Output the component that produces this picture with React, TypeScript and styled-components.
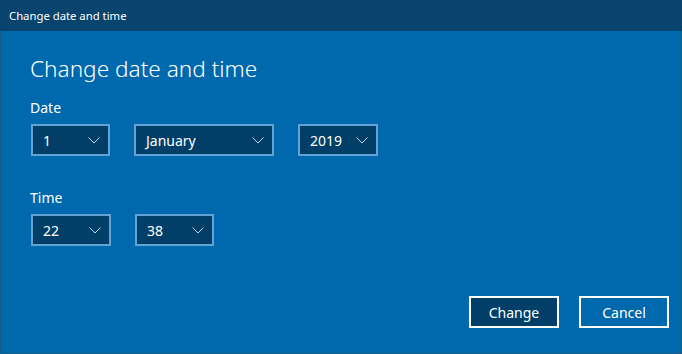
import React from "react";
import styled, { createGlobalStyle } from "styled-components";

const Global = createGlobalStyle`
  html, body { margin: 0; padding: 0; }
  body { width: 682px; height: 354px; overflow: hidden; font-family: "Noto Sans", "Open Sans", sans-serif; }
`;

const Window = styled.div`
  width: 682px;
  height: 354px;
  box-sizing: border-box;
  background: #0068ad;
  border: 1px solid #1c5a85;
  border-top: none;
  display: flex;
  flex-direction: column;
  color: #fff;
`;

const TitleBar = styled.div`
  height: 31px;
  flex: none;
  background: #08446d;
  display: flex;
  align-items: center;
  padding-left: 9px;
  font-size: 11.3px;
  margin: 0 -1px;
`;

const Body = styled.div`
  flex: 1;
  display: flex;
  flex-direction: column;
  padding: 22px 12px 25px 29px;
`;

const Heading = styled.h1`
  margin: 0;
  font-weight: 300;
  font-size: 22.6px;
  line-height: 32px;
`;

const Label = styled.div<{ $top: number }>`
  font-size: 14px;
  line-height: 18px;
  margin-top: ${(p) => p.$top}px;
`;

const Row = styled.div`
  display: flex;
  gap: 24px;
  margin-top: 7px;
  margin-left: 1px;
`;

const Select = styled.div<{ $w: number }>`
  width: ${(p) => p.$w}px;
  height: 32px;
  box-sizing: border-box;
  border: 2px solid #62a3d6;
  background: #013f69;
  display: flex;
  align-items: center;
  justify-content: space-between;
  padding: 0 8px 0 10px;
  font-size: 14px;
`;

const Chevron = () => (
  <svg width="12" height="7" viewBox="0 0 12 7">
    <path d="M0.5 0.5 L6 6 L11.5 0.5" fill="none" stroke="#b9d3ea" strokeWidth="1" />
  </svg>
);

const Footer = styled.div`
  margin-top: auto;
  display: flex;
  justify-content: flex-end;
  gap: 20px;
`;

const Button = styled.button<{ $primary?: boolean }>`
  width: 90px;
  height: 32px;
  box-sizing: border-box;
  border: 2px solid #ffffff;
  background: ${(p) => (p.$primary ? "#013f69" : "transparent")};
  color: #fff;
  font-family: inherit;
  font-size: 14px;
  padding: 0;
`;

const Dropdown = ({ w, v }: { w: number; v: string }) => (
  <Select $w={w}>
    <span>{v}</span>
    <Chevron />
  </Select>
);

export default function App() {
  return (
    <>
      <Global />
      <Window>
        <TitleBar>Change date and time</TitleBar>
        <Body>
          <Heading>Change date and time</Heading>
          <Label $top={14}>Date</Label>
          <Row>
            <Dropdown w={79} v="1" />
            <Dropdown w={140} v="January" />
            <Dropdown w={80} v="2019" />
          </Row>
          <Label $top={33}>Time</Label>
          <Row>
            <Dropdown w={80} v="22" />
            <Dropdown w={79} v="38" />
          </Row>
          <Footer>
            <Button $primary>Change</Button>
            <Button>Cancel</Button>
          </Footer>
        </Body>
      </Window>
    </>
  );
}
